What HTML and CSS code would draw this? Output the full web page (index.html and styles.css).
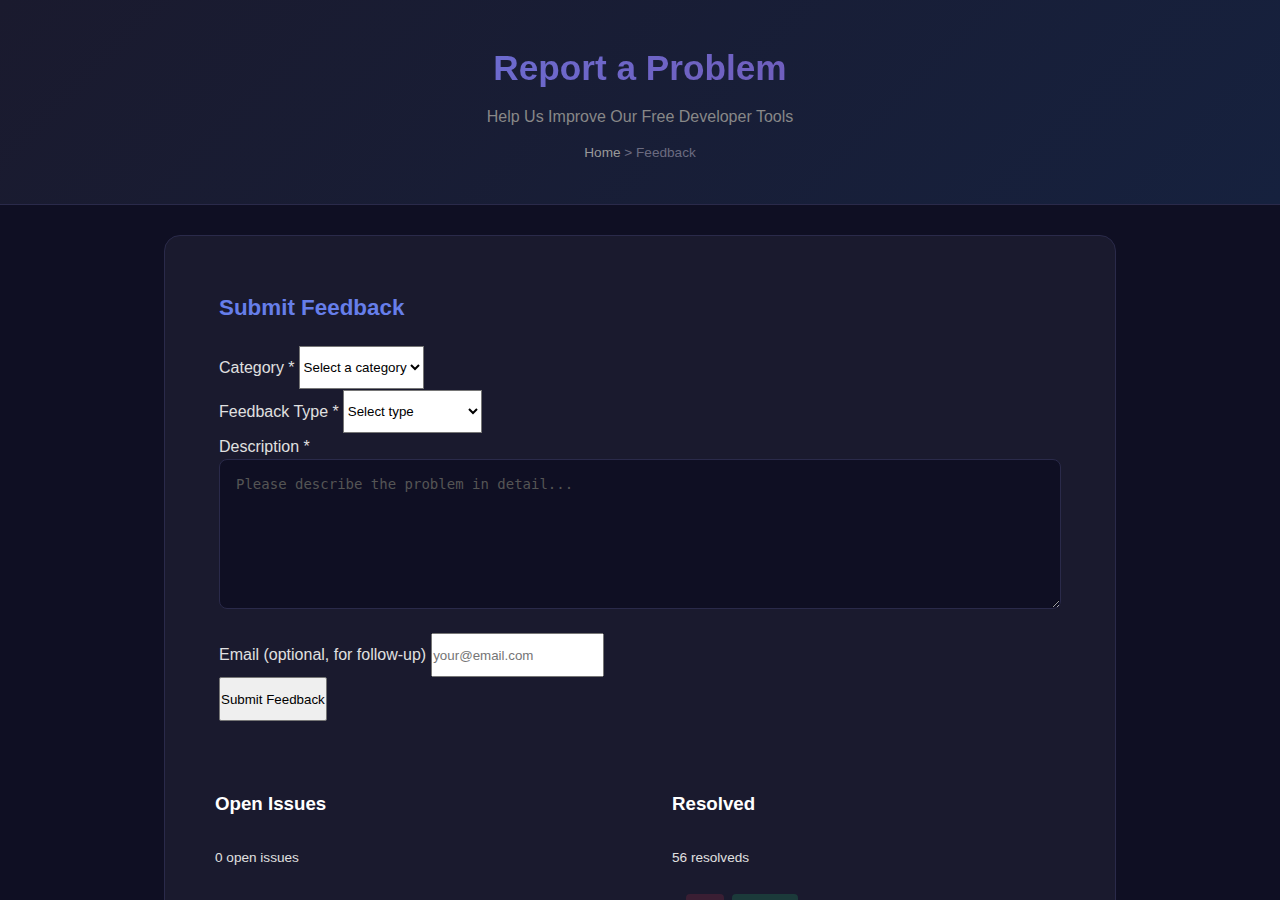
FILE: index.html
```html
<!DOCTYPE html>
<html lang="en">
<head>
  <meta charset="UTF-8" />
  <meta name="viewport" content="width=device-width, initial-scale=1.0"/>
  <title>Report a Problem</title>
  <link rel="stylesheet" href="styles.css">
</head>
<body>
  <header class="hero">
    <h1 class="hero-title">Report a Problem</h1>
    <p class="hero-sub">Help Us Improve Our Free Developer Tools</p>
    <div class="crumbs"><a href="#">Home</a> &gt; Feedback</div>
  </header>

  <main>
    <div class="card">
      <section class="form-section">
        <h2>Submit Feedback</h2>
        <div class="row">
          <label for="category">Category *</label>
          <select id="category" class="sel-cat">
            <option>Select a category</option>
            <option>JSON Tools</option>
            <option>Formatters</option>
            <option>Converters</option>
          </select>
        </div>
        <div class="row">
          <label for="type">Feedback Type *</label>
          <select id="type" class="sel-type">
            <option>Select type</option>
            <option>Bug Report</option>
            <option>Feature Request</option>
            <option>Performance Issue</option>
          </select>
        </div>
        <label class="block-label" for="desc">Description *</label>
        <textarea id="desc" placeholder="Please describe the problem in detail..."></textarea>
        <div class="row row-email">
          <label for="email">Email (optional, for follow-up)</label>
          <input type="email" id="email" placeholder="your@email.com">
        </div>
        <button class="submit">Submit Feedback</button>
      </section>

      <section class="stats">
        <div class="stat-col">
          <h3>Open Issues</h3>
          <p>0 open issues</p>
        </div>
        <div class="stat-col">
          <h3>Resolved</h3>
          <p>56 resolveds</p>
          <div class="issue">
            <span class="badge badge-red"></span>
            <span class="badge badge-green"></span>
          </div>
        </div>
      </section>
    </div>
  </main>
</body>
</html>
```

FILE: styles.css
```css
body {
  margin: 0;
  background: #0f0f23;
  color: #e0e0e0;
  font-family: "Liberation Sans", Arial, sans-serif;
}
.hero {
  background: linear-gradient(135deg, #1a1a2e 0%, #16213e 100%);
  border-bottom: 1px solid #2a2a4a;
  padding: 48px 0 44px;
  text-align: center;
}
.hero-title {
  margin: 0 0 20px;
  font-size: 2.2rem;
  font-weight: bold;
  background: linear-gradient(135deg, #667eea 0%, #764ba2 100%);
  -webkit-background-clip: text;
  background-clip: text;
  color: transparent;
}
.hero-sub {
  margin: 0 0 19px;
  font-size: 1rem;
  color: #888;
}
.crumbs {
  font-size: 0.85rem;
  color: #6b6b80;
}
.crumbs a {
  color: #999;
  text-decoration: none;
}
main {
  max-width: 952px;
  margin: 30px auto 0;
}
.card {
  background: #1a1a2e;
  border: 1px solid #2a2a4a;
  border-radius: 16px;
  padding: 48px;
}
.form-section {
  padding: 6px;
}
.form-section h2 {
  margin: 5px 0 25px;
  font-size: 1.4rem;
  color: #667eea;
}
.row {
  display: flex;
  align-items: center;
  gap: 4px;
  margin-bottom: 1px;
  font-size: 16px;
}
.row-email {
  gap: 5px;
  margin-bottom: 0;
}
select, input, button {
  font-family: "Liberation Sans", Arial, sans-serif;
  font-size: 13.33px;
  box-sizing: border-box;
}
select {
  height: 43px;
  background: #fff;
  color: #000;
  border: 1px solid #767676;
  border-radius: 0;
}
.sel-cat { width: 125px; }
.sel-type { width: 139px; }
.block-label {
  display: block;
  margin-top: 5px;
  margin-bottom: 3px;
  font-size: 16px;
}
textarea {
  display: block;
  box-sizing: border-box;
  width: 100%;
  height: 150px;
  margin-bottom: 24px;
  padding: 16px;
  background: #0f0f23;
  color: #e0e0e0;
  border: 1px solid #2a2a4a;
  border-radius: 8px;
  font-family: "DejaVu Sans Mono", monospace;
  font-size: 14px;
}
textarea::placeholder {
  color: #555;
}
input {
  width: 173px;
  height: 44px;
  padding: 0;
}
.submit {
  height: 44px;
  padding: 0 1px;
  background: #efefef;
  color: #000;
  border: 1px solid #767676;
  border-radius: 2px;
}
.stats {
  display: grid;
  grid-template-columns: 1fr 1fr;
  gap: 64px;
  margin-top: 66px;
  padding: 0 2px;
}
.stats h3 {
  margin: 0 0 35px;
  font-size: 1.17em;
  color: #fff;
}
.stats p {
  margin: 0;
  font-size: 0.85rem;
}
.issue {
  display: flex;
  gap: 8px;
  padding: 29px 14px 0;
}
.badge {
  display: inline-block;
  height: 24px;
  border-radius: 4px;
}
.badge-red {
  width: 38px;
  background: #3a1e33;
}
.badge-green {
  width: 66px;
  background: #1b3a3a;
}
```
